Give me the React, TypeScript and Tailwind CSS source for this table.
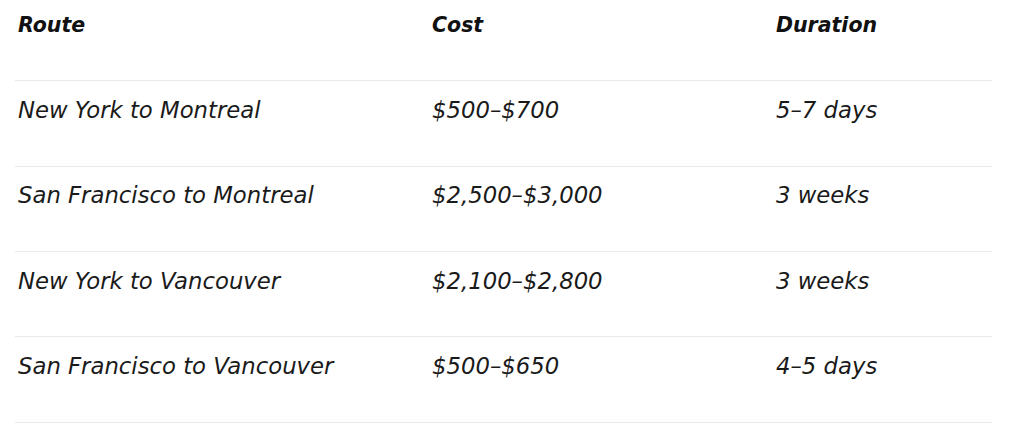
const rows = [
  { route: 'New York to Montreal', cost: '$500–$700', duration: '5–7 days' },
  { route: 'San Francisco to Montreal', cost: '$2,500–$3,000', duration: '3 weeks' },
  { route: 'New York to Vancouver', cost: '$2,100–$2,800', duration: '3 weeks' },
  { route: 'San Francisco to Vancouver', cost: '$500–$650', duration: '4–5 days' },
]

const font = { fontFamily: '"DejaVu Sans", Verdana, sans-serif' }

export default function App() {
  return (
    <div className="w-[1024px] h-[434px] bg-white overflow-hidden pl-[15px]" style={font}>
      <table className="w-[977px] border-collapse table-fixed italic text-[22.75px] text-[#1a1a1a]">
        <colgroup>
          <col className="w-[414px]" />
          <col className="w-[344px]" />
          <col />
        </colgroup>
        <thead>
          <tr className="border-b border-[#e9e9e9]">
            <th className="text-left font-bold text-[20.5px] text-[#111] leading-[33px] pt-[9.2px] pb-[38.3px] pl-[3px]">Route</th>
            <th className="text-left font-bold text-[20.5px] text-[#111] leading-[33px] pt-[9.2px] pb-[38.3px] pl-[3px]">Cost</th>
            <th className="text-left font-bold text-[20.5px] text-[#111] leading-[33px] pt-[9.2px] pb-[38.3px] pl-[3px]">Duration</th>
          </tr>
        </thead>
        <tbody>
          {rows.map((r) => (
            <tr key={r.route} className="border-b border-[#e9e9e9]">
              <td className="font-normal leading-[33px] pt-[12.5px] pb-[38.8px] pl-[3px]">{r.route}</td>
              <td className="font-normal leading-[33px] pt-[12.5px] pb-[38.8px] pl-[3px]">{r.cost}</td>
              <td className="font-normal leading-[33px] pt-[12.5px] pb-[38.8px] pl-[3px]">{r.duration}</td>
            </tr>
          ))}
        </tbody>
      </table>
    </div>
  )
}
